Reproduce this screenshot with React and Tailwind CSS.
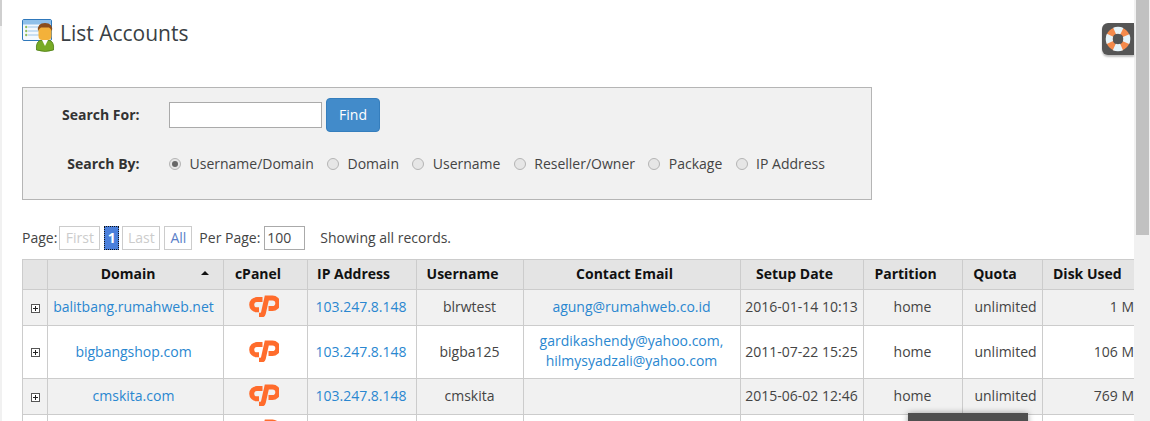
const font = { fontFamily: '"Open Sans", sans-serif' };

function Logo() {
  return (
    <svg width="31" height="22" viewBox="0 0 31 22" className="inline-block align-middle">
      <path d="M14.500 4.600H8.800a5 5 0 0 0 0 10.200H11" fill="none" stroke="#ff6c2c" strokeWidth="5" />
      <path d="M11 20.300 L12.500 20.300 Q14.800 20.300 15.400 18 L18.800 3 H24.500 a5.300 5.300 0 0 1 0 10.600 H20.500" fill="none" stroke="#ff6c2c" strokeWidth="5" />
    </svg>
  );
}

function Expand() {
  return (
    <svg width="9" height="9" viewBox="0 0 9 9" className="inline-block">
      <rect x="0.5" y="0.5" width="8" height="8" fill="#fff" stroke="#555" />
      <path d="M2 4.500h5M4.500 2v5" stroke="#222" />
    </svg>
  );
}

function AccountsIcon() {
  return (
    <svg width="33" height="33" viewBox="0 0 33 33" className="mt-[3px] shrink-0">
      <rect x="0.500" y="0.500" width="29" height="21" rx="1.500" fill="#f4f9fe" stroke="#2f78bb" />
      <rect x="1" y="1" width="28" height="4.500" fill="#8fc0ea" />
      <path d="M6 8h14M6 12h14M6 16h14" stroke="#9cc4e8" />
      <path d="M3 8h2.400M4.200 6.800v2.400M3 12h2.400M4.200 10.800v2.400M3 16h2.400M4.200 14.800v2.400" stroke="#7fb241" />
      <path d="M14.500 31 q-1 -9 5 -10 l3.500 4 l3.500 -4 q6 1 5 10 q-8 3 -17 0z" fill="#78ab26" stroke="#4f7f16" strokeWidth="0.800" />
      <path d="M20 21 l3 6 l3 -6z" fill="#fff" />
      <rect x="16.500" y="7" width="13" height="14" rx="4" fill="#f3b13a" />
      <path d="M16 12 q-1 -8 7 -8 q8 0 7 8 q-1.500 -3 -3 -3.500 l-8 0 q-2 1 -3 3.500z" fill="#8a4d1c" />
    </svg>
  );
}

function Lifebuoy() {
  return (
    <svg width="26" height="26" viewBox="0 0 26 26" className="mb-[1px]">
      <circle cx="13" cy="13" r="8.800" fill="none" stroke="#f58a4b" strokeWidth="6.500" />
      <circle cx="13" cy="13" r="8.800" fill="none" stroke="#e6f4fa" strokeWidth="7" strokeDasharray="7.500 6.320" strokeDashoffset="3.750" />
    </svg>
  );
}

function Radio({ checked, label }) {
  return (
    <span className="flex items-center gap-[8.5px]">
      <span className="w-[12px] h-[12px] rounded-full border border-[#b4b4b4] bg-[#e6e6e6] flex items-center justify-center">
        {checked && <span className="w-[6px] h-[6px] rounded-full bg-[#666]" />}
      </span>
      <span className="pb-[1px]">{label}</span>
    </span>
  );
}

const rows = [
  { domain: 'balitbang.rumahweb.net', ip: '103.247.8.148', user: 'blrwtest', email: ['agung@rumahweb.co.id'], date: '2016-01-14 10:13', disk: '1 M', h: 'h-[36px]', bg: 'bg-[#f1f1f1]' },
  { domain: 'bigbangshop.com', ip: '103.247.8.148', user: 'bigba125', email: ['gardikashendy@yahoo.com,', 'hilmysyadzali@yahoo.com'], date: '2011-07-22 15:25', disk: '106 M', h: 'h-[53px]', bg: 'bg-white' },
  { domain: 'cmskita.com', ip: '103.247.8.148', user: 'cmskita', email: [], date: '2015-06-02 12:46', disk: '769 M', h: 'h-[36px]', bg: 'bg-[#f1f1f1]' },
];

const th = 'border border-[#cccccc] font-bold text-center text-[#111] p-0 pb-[2px]';
const td = 'border border-[#cccccc] text-center p-0 pb-[2px]';

export default function App() {
  return (
    <div style={font} className="relative flex h-[421px] w-[1150px] overflow-hidden bg-white text-[14px] text-[#444]">
      <div className="w-[2px] shrink-0 bg-[#f1f1f1]">
        <div className="h-[26px] w-[2px] bg-[#cfcfcf]" />
      </div>
      <main className="w-[1132px] shrink-0 overflow-hidden pl-[20px] pt-[16px]">
        <div className="flex items-start h-[33px] gap-[5px]">
          <AccountsIcon />
          <h1 className="pt-[1px] text-[21px] leading-[33px] font-normal text-[#3a3f45]">List Accounts</h1>
        </div>

        <div className="mt-[38px] box-border h-[113px] w-[850px] border border-[#b5b5b5] bg-[#f1f1f1] pt-[10px]">
          <div className="flex items-center h-[34px]">
            <span className="w-[116.5px] pb-[2px] text-right font-bold text-[#333]">Search For:</span>
            <input className="ml-[29.5px] box-border h-[26px] w-[153px] border border-[#aaaaaa] bg-white" />
            <button className="ml-[4px] h-[34px] w-[54px] rounded-[4px] border border-[#357ebd] bg-[#428bca] pb-[2px] text-white">Find</button>
          </div>
          <div className="mt-[22px] flex items-center h-[20px]">
            <span className="w-[116.5px] pb-[1px] text-right font-bold text-[#333]">Search By:</span>
            <div className="ml-[29.5px] flex items-center gap-[13.3px]">
              <Radio checked label="Username/Domain" />
              <Radio label="Domain" />
              <Radio label="Username" />
              <Radio label="Reseller/Owner" />
              <Radio label="Package" />
              <Radio label="IP Address" />
            </div>
          </div>
        </div>

        <div className="mt-[26px] flex items-center h-[24px]">
          <span className="mr-[2px] pb-[2px]">Page:</span>
          <span className="box-border flex h-[24px] w-[41px] items-center justify-center border border-[#cccccc] pb-[1px] text-[#cccccc]">First</span>
          <span className="ml-[4px] box-border flex h-[24px] w-[15px] items-center justify-center border border-dotted border-[#111] bg-[#4a7fdb] pb-[1px] font-bold text-white">1</span>
          <span className="ml-[3px] box-border flex h-[24px] w-[38px] items-center justify-center border border-[#cccccc] pb-[1px] text-[#cccccc]">Last</span>
          <span className="ml-[4px] box-border flex h-[24px] w-[28px] items-center justify-center border border-[#cccccc] pb-[1px] text-[#5a7fc8]">All</span>
          <span className="ml-[7px] pb-[1px]">Per Page:</span>
          <input readOnly value="100" className="ml-[4px] box-border h-[24px] w-[41px] border border-[#aaaaaa] bg-white pb-[2px] pl-[2px] text-[#444]" />
          <span className="ml-[15px] pb-[2px]">Showing all records.</span>
        </div>

        <table className="mt-[9px] table-fixed border-collapse w-[1123px]">
          <colgroup>
            <col className="w-[25px]" />
            <col className="w-[176px]" />
            <col className="w-[84px]" />
            <col className="w-[109px]" />
            <col className="w-[107px]" />
            <col className="w-[217px]" />
            <col className="w-[123px]" />
            <col className="w-[99px]" />
            <col className="w-[80px]" />
            <col className="w-[103px]" />
          </colgroup>
          <thead>
            <tr className="h-[30px] bg-[#e4e4e4]">
              <th className={th}></th>
              <th className={`${th} pr-[15px]`}>
                <span className="relative block">
                  Domain
                  <span className="absolute right-[-1px] top-[8px] h-0 w-0 border-x-[4px] border-b-[4px] border-x-transparent border-b-[#111]" />
                </span>
              </th>
              <th className={`${th} pr-[15px]`}>cPanel</th>
              <th className={`${th} pr-[17px]`}>IP Address</th>
              <th className={`${th} pr-[15px]`}>Username</th>
              <th className={`${th} pr-[15px]`}>Contact Email</th>
              <th className={`${th} pr-[15px]`}>Setup Date</th>
              <th className={`${th} pr-[15px]`}>Partition</th>
              <th className={`${th} pr-[15px]`}>Quota</th>
              <th className={`${th} text-left pl-[10px]`}>Disk Used</th>
            </tr>
          </thead>
          <tbody>
            {rows.map((r) => (
              <tr key={r.domain} className={`${r.h} ${r.bg}`}>
                <td className={td}><Expand /></td>
                <td className={`${td} pr-[4px]`}><a className="text-[#2a87d0]" href="#">{r.domain}</a></td>
                <td className={`${td} pr-[4px] pb-[4px]`}><Logo /></td>
                <td className={`${td} pr-[2px]`}><a className="text-[#2a87d0]" href="#">{r.ip}</a></td>
                <td className={`${td} pr-[1px]`}>{r.user}</td>
                <td className={`${td} pr-[1px] leading-[20px]`}>
                  {r.email.map((e) => (
                    <a key={e} className="block text-[#2a87d0]" href="#">{e}</a>
                  ))}
                </td>
                <td className={`${td} pr-[1px]`}>{r.date}</td>
                <td className={`${td} pr-[1px]`}>home</td>
                <td className={`${td} pl-[6px]`}>unlimited</td>
                <td className={`${td} text-right`}><span className="block w-[91px] text-right">{r.disk}</span></td>
              </tr>
            ))}
            <tr className="h-[36px] bg-white">
              <td className={td}></td>
              <td className={td}></td>
              <td className={`${td} pr-[4px] pb-[6px]`}><Logo /></td>
              <td className={td}></td>
              <td className={td}></td>
              <td className={td}></td>
              <td className={td}></td>
              <td className={td}></td>
              <td className={td}></td>
              <td className={td}></td>
            </tr>
          </tbody>
        </table>
      </main>
      <div className="w-[16px] shrink-0 bg-[#f1f1f1] pl-[2px] pr-[1px]">
        <div className="h-[235px] bg-[#c1c1c1]" />
      </div>

      <div className="absolute left-[1102px] top-[23px] flex h-[32px] w-[32px] items-center justify-center rounded-l-[6px] bg-[#555] shadow-[0_2px_2px_rgba(0,0,0,0.25)]">
        <Lifebuoy />
      </div>
      <div className="absolute left-[908px] top-[413px] h-[20px] w-[120px] bg-[#4f4f4f] shadow-[0_0_6px_rgba(0,0,0,0.35)]" />
    </div>
  );
}
